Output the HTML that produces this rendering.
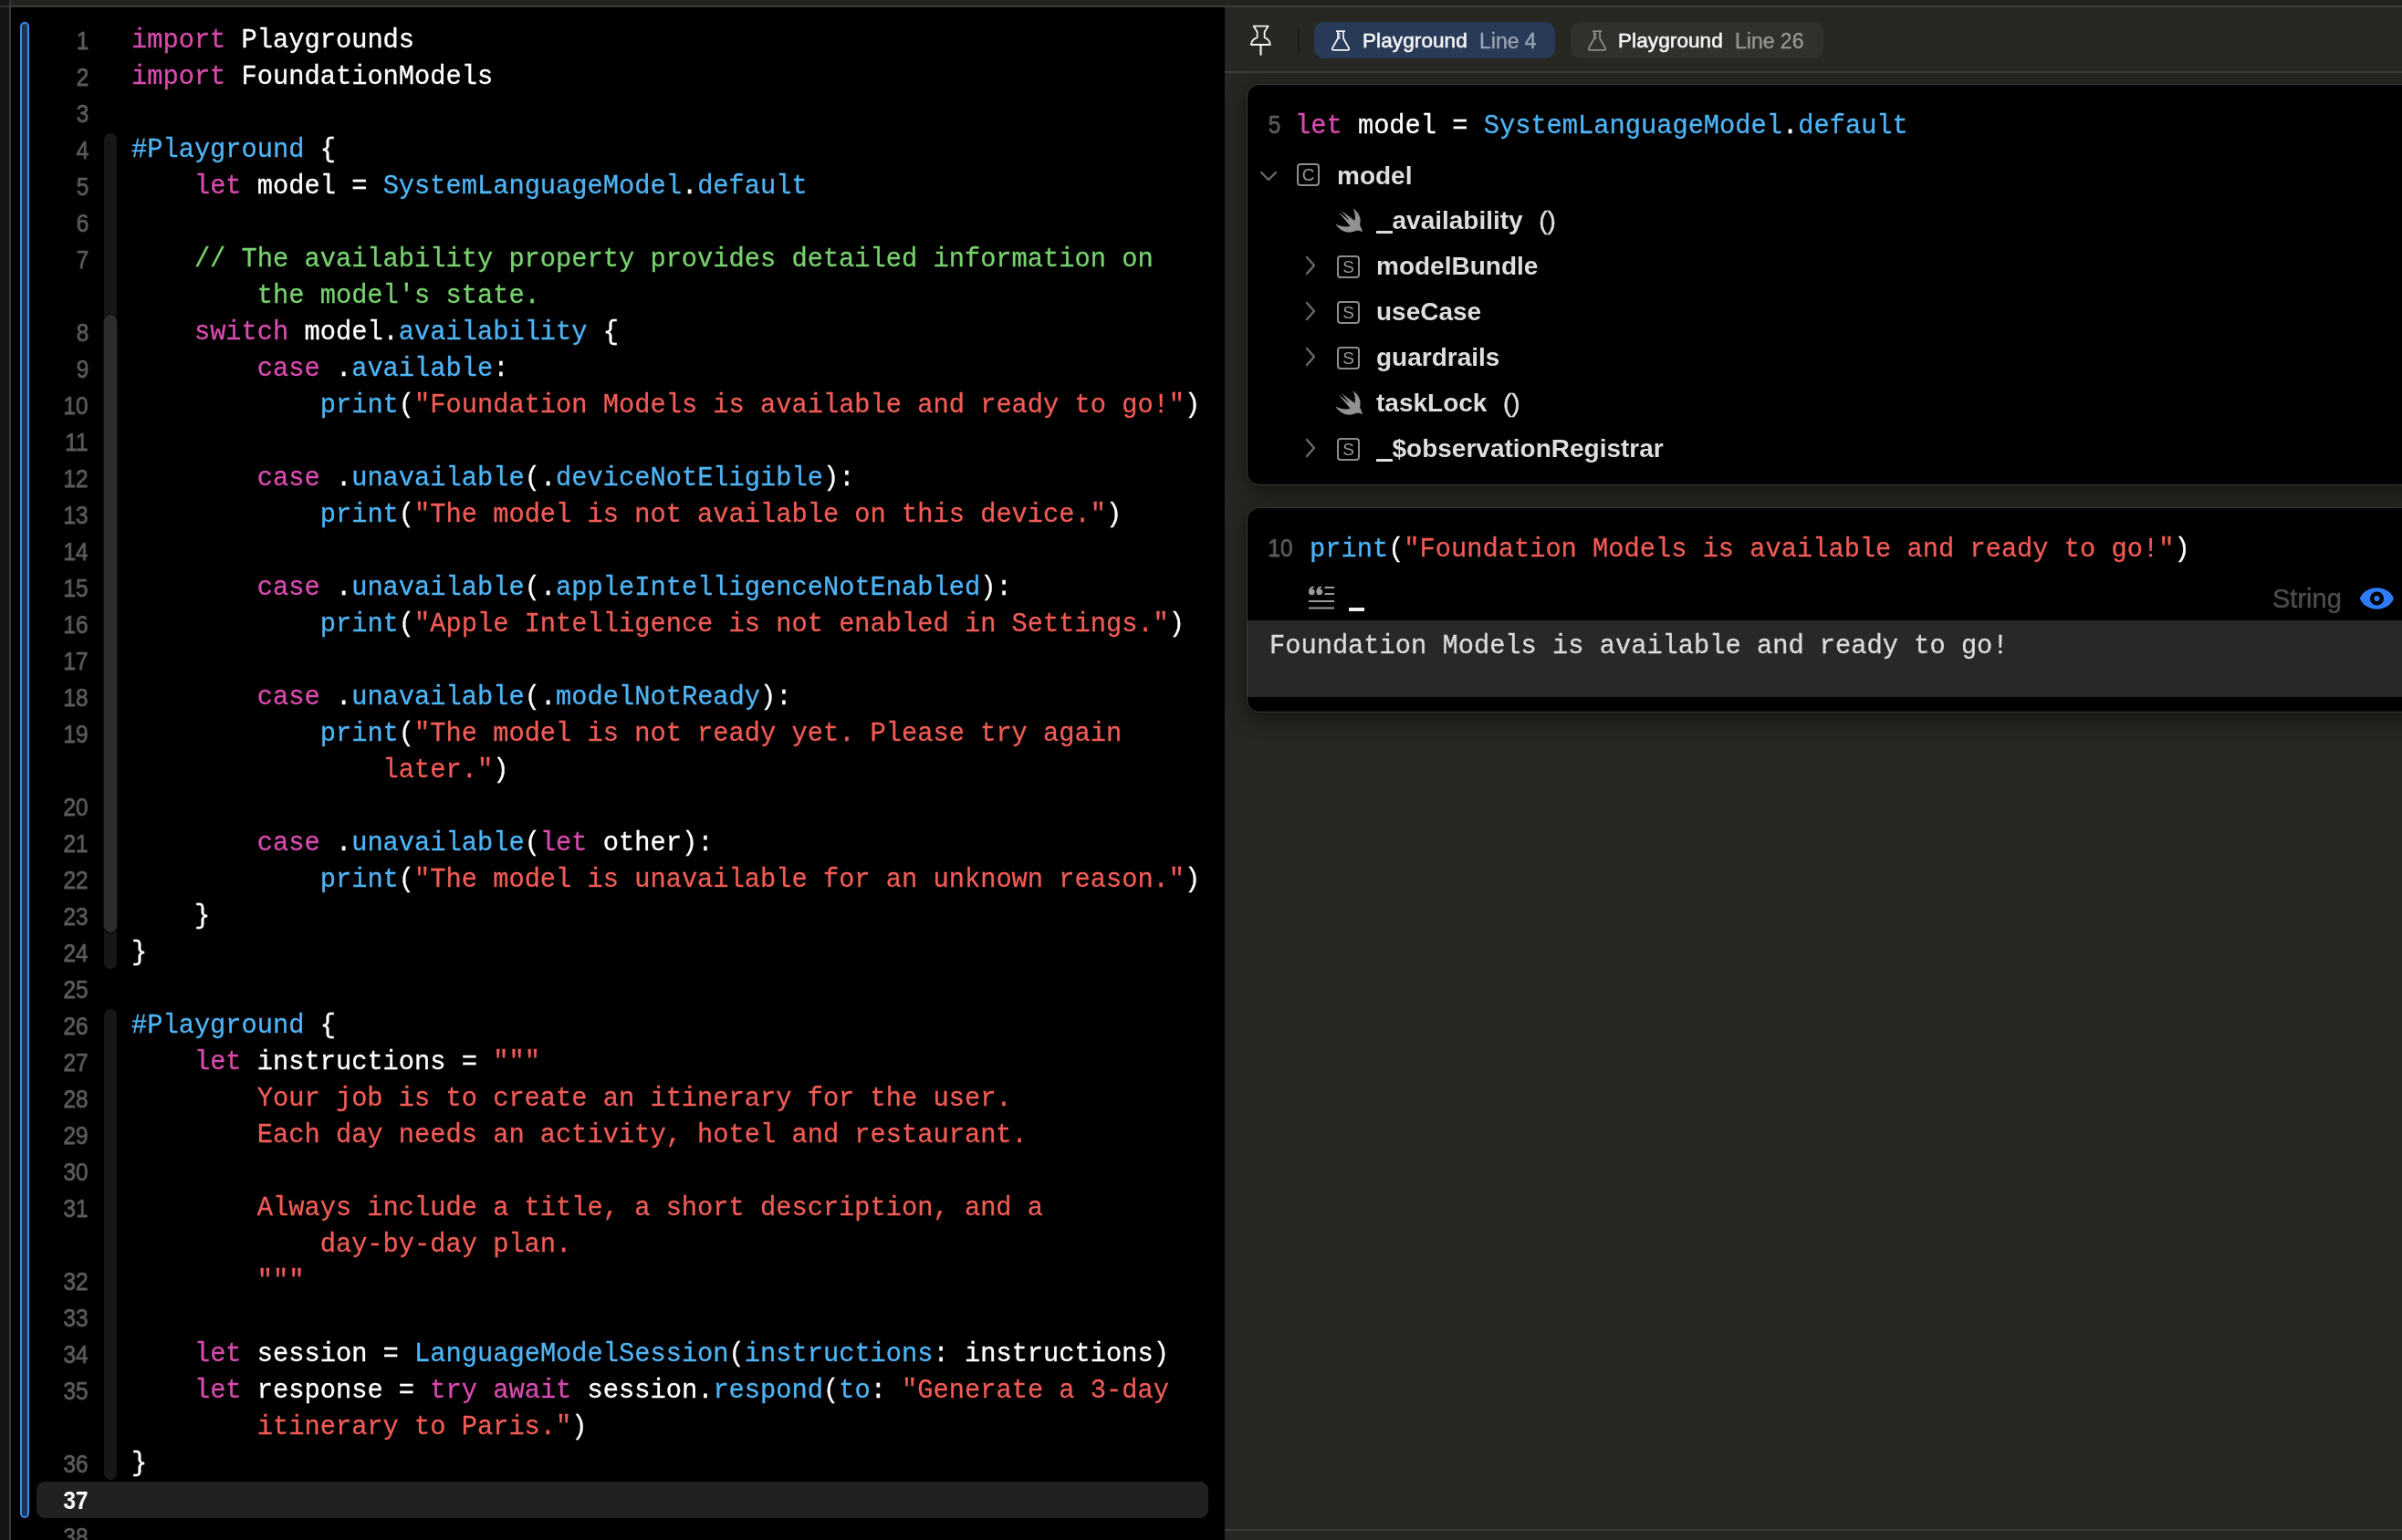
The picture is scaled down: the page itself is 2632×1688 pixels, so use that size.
<!DOCTYPE html><html><head><meta charset="utf-8"><style>
*{margin:0;padding:0;box-sizing:border-box}
html,body{width:2632px;height:1688px;overflow:hidden;background:#000}
body{position:relative;font-family:"Liberation Sans",sans-serif;-webkit-font-smoothing:antialiased}
.abs{position:absolute;will-change:transform}
.mono{font-family:"Liberation Mono",monospace;-webkit-text-stroke:0.3px currentColor}
.row{position:absolute;left:144.2px;height:40px;line-height:40px;font-family:"Liberation Mono",monospace;font-size:28.717px;color:#fff;white-space:pre;will-change:transform;-webkit-text-stroke:0.3px currentColor}
.k{color:#d74bae}
.t{color:#4fb4f5}
.s{color:#f05b56}
.c{color:#78d16e}
.num{position:absolute;right:2535px;height:40px;line-height:40px;font-size:27.5px;color:#5c5c5c;transform:scaleX(0.89);transform-origin:right center;white-space:pre;-webkit-text-stroke:0.75px #5c5c5c;will-change:transform}
.num.cur{color:#fff;font-weight:bold;-webkit-text-stroke:0}
.us{display:inline-block;width:17.5px;height:3.5px;background:#dedede;position:relative;top:5px}
.fold{position:absolute;left:114px;width:14px;border-radius:7px}
.tree{position:absolute;left:0;height:50px;line-height:50px;font-weight:bold;font-size:28px;color:#dedede;white-space:pre;will-change:transform}
</style></head><body>
<div class="abs" style="left:12px;top:0;width:2620px;height:6px;background:#22231e"></div>
<div class="abs" style="left:12px;top:6px;width:2620px;height:2px;background:#3a3b37"></div>
<div class="abs" style="left:0;top:0;width:10px;height:1688px;background:#151515"></div>
<div class="abs" style="left:0;top:6px;width:10px;height:2px;background:#2e2e2e"></div>
<div class="abs" style="left:10px;top:0;width:2px;height:1688px;background:#383936"></div>
<div class="abs" style="left:40px;top:1624px;width:1284px;height:40px;background:#212121;border-radius:9px"></div>
<div class="abs" style="left:22px;top:24px;width:10px;height:1640px;background:#19335a;border:2px solid #3d8bea;border-radius:5px"></div>
<div class="fold" style="top:146px;height:916px;background:#171717"></div>
<div class="fold" style="top:345px;height:677px;background:#2d2d2d;box-shadow:0 0 0 1.5px #0a0a0a"></div>
<div class="fold" style="top:1106px;height:516px;background:#171717"></div>
<div class="num" style="top:25px">1</div>
<div class="num" style="top:65px">2</div>
<div class="num" style="top:105px">3</div>
<div class="num" style="top:145px">4</div>
<div class="num" style="top:185px">5</div>
<div class="num" style="top:225px">6</div>
<div class="num" style="top:265px">7</div>
<div class="num" style="top:345px">8</div>
<div class="num" style="top:385px">9</div>
<div class="num" style="top:425px">10</div>
<div class="num" style="top:465px">11</div>
<div class="num" style="top:505px">12</div>
<div class="num" style="top:545px">13</div>
<div class="num" style="top:585px">14</div>
<div class="num" style="top:625px">15</div>
<div class="num" style="top:665px">16</div>
<div class="num" style="top:705px">17</div>
<div class="num" style="top:745px">18</div>
<div class="num" style="top:785px">19</div>
<div class="num" style="top:865px">20</div>
<div class="num" style="top:905px">21</div>
<div class="num" style="top:945px">22</div>
<div class="num" style="top:985px">23</div>
<div class="num" style="top:1025px">24</div>
<div class="num" style="top:1065px">25</div>
<div class="num" style="top:1105px">26</div>
<div class="num" style="top:1145px">27</div>
<div class="num" style="top:1185px">28</div>
<div class="num" style="top:1225px">29</div>
<div class="num" style="top:1265px">30</div>
<div class="num" style="top:1305px">31</div>
<div class="num" style="top:1385px">32</div>
<div class="num" style="top:1425px">33</div>
<div class="num" style="top:1465px">34</div>
<div class="num" style="top:1505px">35</div>
<div class="num" style="top:1585px">36</div>
<div class="num cur" style="top:1625px">37</div>
<div class="num" style="top:1665px">38</div>
<div class="row" style="top:24.7px"><span class="k">import</span> Playgrounds</div>
<div class="row" style="top:64.7px"><span class="k">import</span> FoundationModels</div>
<div class="row" style="top:104.7px"></div>
<div class="row" style="top:144.7px"><span class="t">#Playground</span> {</div>
<div class="row" style="top:184.7px">    <span class="k">let</span> model = <span class="t">SystemLanguageModel</span>.<span class="t">default</span></div>
<div class="row" style="top:224.7px"></div>
<div class="row" style="top:264.7px"><span class="c">    // The availability property provides detailed information on</span></div>
<div class="row" style="top:304.7px"><span class="c">        the model's state.</span></div>
<div class="row" style="top:344.7px">    <span class="k">switch</span> model.<span class="t">availability</span> {</div>
<div class="row" style="top:384.7px">        <span class="k">case</span> .<span class="t">available</span>:</div>
<div class="row" style="top:424.7px">            <span class="t">print</span>(<span class="s">"Foundation Models is available and ready to go!"</span>)</div>
<div class="row" style="top:464.7px"></div>
<div class="row" style="top:504.7px">        <span class="k">case</span> .<span class="t">unavailable</span>(.<span class="t">deviceNotEligible</span>):</div>
<div class="row" style="top:544.7px">            <span class="t">print</span>(<span class="s">"The model is not available on this device."</span>)</div>
<div class="row" style="top:584.7px"></div>
<div class="row" style="top:624.7px">        <span class="k">case</span> .<span class="t">unavailable</span>(.<span class="t">appleIntelligenceNotEnabled</span>):</div>
<div class="row" style="top:664.7px">            <span class="t">print</span>(<span class="s">"Apple Intelligence is not enabled in Settings."</span>)</div>
<div class="row" style="top:704.7px"></div>
<div class="row" style="top:744.7px">        <span class="k">case</span> .<span class="t">unavailable</span>(.<span class="t">modelNotReady</span>):</div>
<div class="row" style="top:784.7px">            <span class="t">print</span>(<span class="s">"The model is not ready yet. Please try again</span></div>
<div class="row" style="top:824.7px"><span class="s">                later."</span>)</div>
<div class="row" style="top:864.7px"></div>
<div class="row" style="top:904.7px">        <span class="k">case</span> .<span class="t">unavailable</span>(<span class="k">let</span> other):</div>
<div class="row" style="top:944.7px">            <span class="t">print</span>(<span class="s">"The model is unavailable for an unknown reason."</span>)</div>
<div class="row" style="top:984.7px">    }</div>
<div class="row" style="top:1024.7px">}</div>
<div class="row" style="top:1064.7px"></div>
<div class="row" style="top:1104.7px"><span class="t">#Playground</span> {</div>
<div class="row" style="top:1144.7px">    <span class="k">let</span> instructions = <span class="s">"""</span></div>
<div class="row" style="top:1184.7px"><span class="s">        Your job is to create an itinerary for the user.</span></div>
<div class="row" style="top:1224.7px"><span class="s">        Each day needs an activity, hotel and restaurant.</span></div>
<div class="row" style="top:1264.7px"></div>
<div class="row" style="top:1304.7px"><span class="s">        Always include a title, a short description, and a</span></div>
<div class="row" style="top:1344.7px"><span class="s">            day-by-day plan.</span></div>
<div class="row" style="top:1384.7px"><span class="s">        """</span></div>
<div class="row" style="top:1424.7px"></div>
<div class="row" style="top:1464.7px">    <span class="k">let</span> session = <span class="t">LanguageModelSession</span>(<span class="t">instructions</span>: instructions)</div>
<div class="row" style="top:1504.7px">    <span class="k">let</span> response = <span class="k">try</span> <span class="k">await</span> session.<span class="t">respond</span>(<span class="t">to</span>: <span class="s">"Generate a 3-day</span></div>
<div class="row" style="top:1544.7px"><span class="s">        itinerary to Paris."</span>)</div>
<div class="row" style="top:1584.7px">}</div>
<div class="row" style="top:1624.7px"></div>
<div class="row" style="top:1664.7px"></div>
<div class="abs" style="left:1342px;top:8px;width:1290px;height:1680px;background:#262722"></div>
<div class="abs" style="left:1342px;top:8px;width:1290px;height:70px;background:#272823"></div>
<div class="abs" style="left:1342px;top:78px;width:1290px;height:2px;background:#3b3c37"></div>
<div class="abs" style="left:1342px;top:1676px;width:1290px;height:2px;background:#3a3b36"></div>
<svg class="abs" style="left:1368px;top:26px" width="28" height="36" viewBox="0 0 28 36" fill="none" stroke="#f2f2f2" stroke-width="1.8" stroke-linejoin="round">
<path d="M5.6 2.6 H21.7 L17.6 9 V15.2 C21.2 16.6 23.6 19.6 23.8 23 H3 C3.2 19.6 5.6 16.6 9.6 15.2 V9 Z"/>
<path d="M13.5 23.5 V33.8" stroke-width="2.2" stroke-linecap="round"/>
</svg>
<div class="abs" style="left:1422px;top:30px;width:2px;height:28px;background:#1c1c1a"></div>
<div class="abs" style="left:1440px;top:24px;width:264px;height:40px;background:#283a58;border-radius:11px"></div>
<svg class="abs" style="left:1458px;top:33px" width="22" height="25" viewBox="0 0 22 25" fill="none" stroke="#f4f4f4" stroke-width="1.7" stroke-linejoin="round">
<path d="M6 1.2 H16"/><path d="M8 1.5 V9 L1.8 20 Q1.2 21.9 3.4 21.9 H18.6 Q20.8 21.9 20.2 20 L14 9 V1.5"/><path d="M8 4 H10.5 M8 6.5 H10.5 M8 9 H10.5" stroke-width="1.3"/>
</svg>
<div class="abs" style="left:1492.5px;top:24.6px;height:40px;line-height:40px;font-size:22.5px;color:#f4f4f4;letter-spacing:0.1px;-webkit-text-stroke:0.6px #f4f4f4;white-space:pre">Playground</div>
<div class="abs" style="left:1620.5px;top:24.6px;height:40px;line-height:40px;font-size:23px;color:#98a1b2;-webkit-text-stroke:0.4px #98a1b2;white-space:pre">Line 4</div>
<div class="abs" style="left:1721px;top:24px;width:277px;height:40px;background:#30312c;border-radius:11px"></div>
<svg class="abs" style="left:1739px;top:33px" width="22" height="25" viewBox="0 0 22 25" fill="none" stroke="#8d8d89" stroke-width="1.7" stroke-linejoin="round">
<path d="M6 1.2 H16"/><path d="M8 1.5 V9 L1.8 20 Q1.2 21.9 3.4 21.9 H18.6 Q20.8 21.9 20.2 20 L14 9 V1.5"/><path d="M8 4 H10.5 M8 6.5 H10.5 M8 9 H10.5" stroke-width="1.3"/>
</svg>
<div class="abs" style="left:1772.5px;top:24.6px;height:40px;line-height:40px;font-size:22.5px;color:#f4f4f4;letter-spacing:0.1px;-webkit-text-stroke:0.6px #f4f4f4;white-space:pre">Playground</div>
<div class="abs" style="left:1900.5px;top:24.6px;height:40px;line-height:40px;font-size:23px;color:#959591;-webkit-text-stroke:0.4px #959591;white-space:pre">Line 26</div>
<div class="abs" style="left:1366px;top:92px;width:1280px;height:440px;background:#000;border:1.5px solid #3a3a37;border-radius:14px;box-shadow:0 6px 20px rgba(0,0,0,0.5)"></div>
<div class="num" style="right:1229px;top:116.5px">5</div>
<div class="abs mono" style="left:1419px;top:118.7px;height:40px;line-height:40px;font-size:28.717px;color:#fff;white-space:pre"><span class="k">let</span> model = <span class="t">SystemLanguageModel</span>.<span class="t">default</span></div>
<svg class="abs" style="left:1380px;top:186px" width="20" height="14" viewBox="0 0 20 14" fill="none" stroke="#6a6a6a" stroke-width="2.4" stroke-linecap="round" stroke-linejoin="round"><path d="M2 3 L10 11 L18 3"/></svg>
<div class="abs" style="left:1421px;top:179px;width:25px;height:25px;border:2px solid #8c8c8c;border-radius:4px;color:#9a9a9a;font-size:19px;line-height:21px;text-align:center">C</div>
<div class="tree" style="left:1465px;top:168px">model</div>
<svg class="abs" style="left:1462px;top:227px" width="33" height="30" viewBox="0 0 33 30"><path fill="#929292" d="M20.5 1.25 C27.5 6 30 13 28 19.5 C29.5 22 30.5 25 31 27.5 C28.5 25.5 25.5 25.5 23 26.2 C17 29 8 28.5 1.25 18.25 C7 21.5 13.5 22 17.5 20.75 L4.5 5.25 L16.5 14.8 L15.6 13.4 L8 4 L22.5 15 C23.5 10 22.5 5 20.5 1.25 Z"/></svg>
<div class="tree" style="left:1508px;top:217px"><span class="us"></span>availability<span style="font-weight:normal;margin-left:17.5px;-webkit-text-stroke:0.5px #dedede">()</span></div>
<svg class="abs" style="left:1429px;top:280px" width="14" height="22" viewBox="0 0 14 22" fill="none" stroke="#6a6a6a" stroke-width="2.4" stroke-linecap="round" stroke-linejoin="round"><path d="M3 2 L11 11 L3 20"/></svg>
<div class="abs" style="left:1465px;top:280px;width:25px;height:25px;border:2px solid #8c8c8c;border-radius:4px;color:#9a9a9a;font-size:19px;line-height:21px;text-align:center">S</div>
<div class="tree" style="left:1508px;top:267px">modelBundle</div>
<svg class="abs" style="left:1429px;top:330px" width="14" height="22" viewBox="0 0 14 22" fill="none" stroke="#6a6a6a" stroke-width="2.4" stroke-linecap="round" stroke-linejoin="round"><path d="M3 2 L11 11 L3 20"/></svg>
<div class="abs" style="left:1465px;top:330px;width:25px;height:25px;border:2px solid #8c8c8c;border-radius:4px;color:#9a9a9a;font-size:19px;line-height:21px;text-align:center">S</div>
<div class="tree" style="left:1508px;top:317px">useCase</div>
<svg class="abs" style="left:1429px;top:380px" width="14" height="22" viewBox="0 0 14 22" fill="none" stroke="#6a6a6a" stroke-width="2.4" stroke-linecap="round" stroke-linejoin="round"><path d="M3 2 L11 11 L3 20"/></svg>
<div class="abs" style="left:1465px;top:380px;width:25px;height:25px;border:2px solid #8c8c8c;border-radius:4px;color:#9a9a9a;font-size:19px;line-height:21px;text-align:center">S</div>
<div class="tree" style="left:1508px;top:367px">guardrails</div>
<svg class="abs" style="left:1429px;top:480px" width="14" height="22" viewBox="0 0 14 22" fill="none" stroke="#6a6a6a" stroke-width="2.4" stroke-linecap="round" stroke-linejoin="round"><path d="M3 2 L11 11 L3 20"/></svg>
<div class="abs" style="left:1465px;top:480px;width:25px;height:25px;border:2px solid #8c8c8c;border-radius:4px;color:#9a9a9a;font-size:19px;line-height:21px;text-align:center">S</div>
<div class="tree" style="left:1508px;top:467px"><span class=us></span>$observationRegistrar</div>
<svg class="abs" style="left:1462px;top:427px" width="33" height="30" viewBox="0 0 33 30"><path fill="#929292" d="M20.5 1.25 C27.5 6 30 13 28 19.5 C29.5 22 30.5 25 31 27.5 C28.5 25.5 25.5 25.5 23 26.2 C17 29 8 28.5 1.25 18.25 C7 21.5 13.5 22 17.5 20.75 L4.5 5.25 L16.5 14.8 L15.6 13.4 L8 4 L22.5 15 C23.5 10 22.5 5 20.5 1.25 Z"/></svg>
<div class="tree" style="left:1508px;top:417px">taskLock<span style="font-weight:normal;margin-left:17.5px;-webkit-text-stroke:0.5px #dedede">()</span></div>
<div class="abs" style="left:1366px;top:556px;width:1280px;height:225px;background:#000;border:1.5px solid #3a3a37;border-radius:14px;overflow:hidden;box-shadow:0 6px 20px rgba(0,0,0,0.5)"><div class="abs" style="left:0;top:123px;width:1268px;height:84px;background:#282828"></div></div>
<div class="num" style="right:1215px;top:581px">10</div>
<div class="abs mono" style="left:1434.5px;top:583.2px;height:40px;line-height:40px;font-size:28.717px;color:#fff;white-space:pre"><span class="t">print</span>(<span class="s">"Foundation Models is available and ready to go!"</span>)</div>
<svg class="abs" style="left:1433px;top:642px" width="30" height="28" viewBox="0 0 30 28"><g fill="#9a9a9a"><circle cx="4.3" cy="6.8" r="3.4"/><circle cx="12.8" cy="6.8" r="3.4"/><path d="M1 6.8 Q1 1.2 6.6 0.6 L6.6 2.3 Q3.2 3.2 3.2 6.8Z"/><path d="M9.5 6.8 Q9.5 1.2 15.1 0.6 L15.1 2.3 Q11.7 3.2 11.7 6.8Z"/></g><g stroke="#9a9a9a" stroke-width="2"><path d="M18.5 2 H29 M18.5 9 H29 M1 17 H29 M1 24.5 H29"/></g></svg>
<div class="abs" style="left:1478px;top:666px;width:17px;height:4px;background:#f0f0f0"></div>
<div class="abs" style="left:2490px;top:636px;height:40px;line-height:40px;font-size:29px;color:#4c4c4c;-webkit-text-stroke:0.5px #4c4c4c">String</div>
<svg class="abs" style="left:2585px;top:642.5px" width="40" height="26" viewBox="0 0 40 26"><path fill="#2f7cf6" d="M0.8 13 C7 -2.6 32 -2.6 38 13 C32 28.6 7 28.6 0.8 13Z"/><circle cx="19.5" cy="13" r="7.6" fill="#000"/><circle cx="19.5" cy="13" r="3" fill="#2f7cf6"/></svg>
<div class="abs mono" style="left:1391px;top:689.2px;height:40px;line-height:40px;font-size:28.717px;color:#dcdcdc;white-space:pre">Foundation Models is available and ready to go!</div>
</body></html>
